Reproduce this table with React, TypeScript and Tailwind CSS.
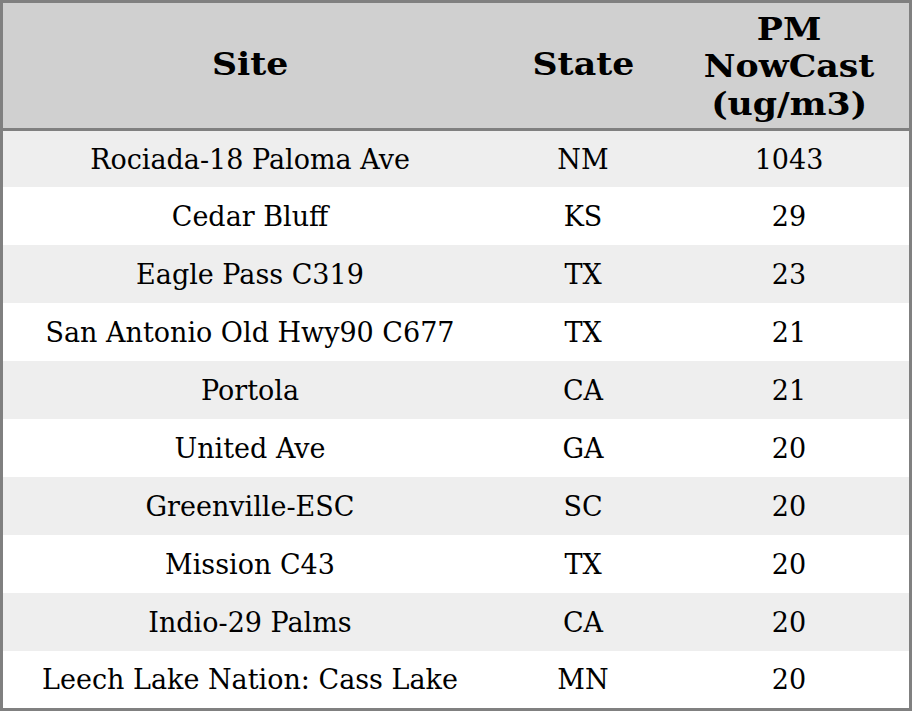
const ROWS = [
  { site: 'Rociada-18 Paloma Ave', state: 'NM', pm: '1043' },
  { site: 'Cedar Bluff', state: 'KS', pm: '29' },
  { site: 'Eagle Pass C319', state: 'TX', pm: '23' },
  { site: 'San Antonio Old Hwy90 C677', state: 'TX', pm: '21' },
  { site: 'Portola', state: 'CA', pm: '21' },
  { site: 'United Ave', state: 'GA', pm: '20' },
  { site: 'Greenville-ESC', state: 'SC', pm: '20' },
  { site: 'Mission C43', state: 'TX', pm: '20' },
  { site: 'Indio-29 Palms', state: 'CA', pm: '20' },
  { site: 'Leech Lake Nation: Cass Lake', state: 'MN', pm: '20' },
]

export default function App() {
  return (
    <div
      className="w-[912px] h-[711px] border-[3px] border-[#808080] bg-white text-black flex flex-col"
      style={{ fontFamily: '"DejaVu Serif", serif' }}
    >
      {/* header */}
      <div className="h-[125px] shrink-0 bg-[#d0d0d0] border-b-[3px] border-[#808080] box-content flex items-center font-bold text-[31px] leading-[37.5px] text-center">
        <div className="w-[494px] mb-[2px]">
          <span className="inline-block scale-x-[1.12]">Site</span>
        </div>
        <div className="w-[172px] mb-[2px]">
          <span className="inline-block scale-x-[1.12]">State</span>
        </div>
        <div className="flex-1 mt-[3px]">
          <span className="inline-block scale-x-[1.12]">
            PM
            <br />
            NowCast
            <br />
            (ug/m3)
          </span>
        </div>
      </div>

      {/* rows */}
      <div className="flex-1 flex flex-col text-[27px]">
        {ROWS.map((r, i) => (
          <div
            key={r.site}
            className={`flex items-center text-center pt-[2px] ${i === 0 ? 'h-[56px]' : i === ROWS.length - 1 ? 'h-[57px]' : 'h-[58px]'} ${
              i % 2 === 0 ? 'bg-[#eeeeee]' : 'bg-white'
            }`}
          >
            <div className="w-[494px]">{r.site}</div>
            <div className="w-[172px]">{r.state}</div>
            <div className="flex-1">{r.pm}</div>
          </div>
        ))}
      </div>
    </div>
  )
}
